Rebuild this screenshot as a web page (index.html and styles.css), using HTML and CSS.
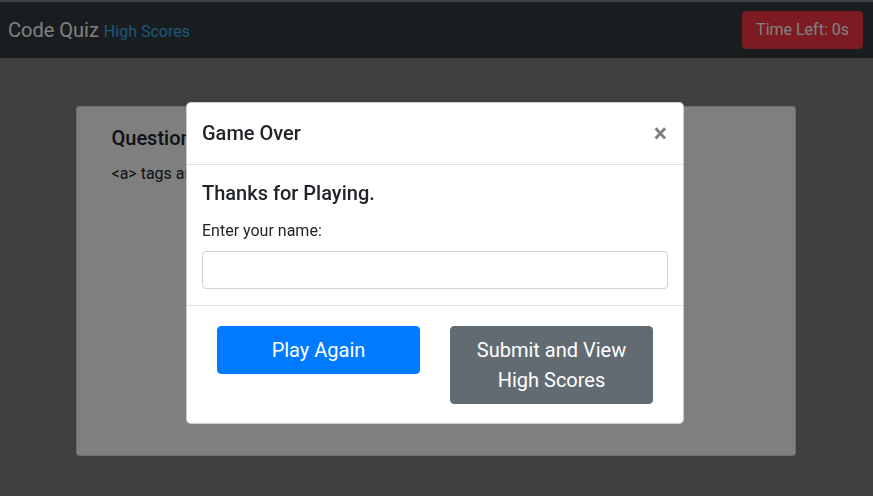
FILE: index.html
```html
<!DOCTYPE html>
<html lang="en">
<head>
<meta charset="utf-8">
<title>Code Quiz</title>
<link rel="stylesheet" href="styles.css">
</head>
<body>
<nav class="navbar">
  <div class="brand-group">
    <span class="brand">Code Quiz</span>
    <a class="hs-link" href="#">High Scores</a>
  </div>
  <button class="timer">Time Left: 0s</button>
</nav>
<main class="container">
  <section class="card">
    <h5 class="card-title">Question 10</h5>
    <p class="card-text">&lt;a&gt; tags are used for:</p>
  </section>
</main>
<div class="backdrop"></div>
<div class="modal">
  <div class="modal-header">
    <h5 class="modal-title">Game Over</h5>
    <span class="close">&times;</span>
  </div>
  <div class="modal-body">
    <h5 class="thanks">Thanks for Playing.</h5>
    <label class="label" for="name">Enter your name:</label>
    <input class="input" id="name" type="text">
  </div>
  <div class="modal-footer">
    <button class="btn btn-primary">Play Again</button>
    <button class="btn btn-secondary">Submit and View High Scores</button>
  </div>
</div>
</body>
</html>
```
FILE: styles.css
```css
* { box-sizing: border-box; }
html, body { margin: 0; height: 100%; }
body {
  background: #808080;
  font-family: "Roboto", "Liberation Sans", sans-serif;
  color: #212529;
  font-size: 16px;
  line-height: 1.5;
  overflow: hidden;
}
.navbar {
  margin-top: 2px;
  height: 56px;
  background: #343a40;
  display: flex;
  align-items: center;
  justify-content: space-between;
  padding: 0 10px 0 8px;
}
.brand-group { display: flex; align-items: baseline; gap: 5px; }
.brand { color: #fff; font-size: 20px; line-height: 30px; }
.hs-link { color: #36b0f4; text-decoration: none; font-size: 16px; }
.timer {
  font-family: inherit;
  font-size: 16px;
  line-height: 24px;
  padding: 6px 13px;
  color: #fff;
  background: #f83844;
  border: 1px solid #f83844;
  border-radius: 4px;
}
.container {
  width: 720px;
  margin: 48px auto 0;
  position: relative;
  left: -1px;
}
.card {
  background: #fff;
  border: 1px solid rgba(0,0,0,.125);
  border-radius: 4px;
  height: 350px;
  padding: 19px 35px;
}
.card-title { margin: 0 0 12px; font-size: 20px; font-weight: 500; line-height: 1.2; }
.card-text { margin: 0; }
.backdrop {
  position: fixed;
  inset: 0;
  background: rgba(0,0,0,.5);
}
.modal {
  position: fixed;
  top: 102px;
  left: 186px;
  width: 498px;
  background: #fff;
  border: 1px solid rgba(0,0,0,.2);
  border-radius: 5px;
  display: flex;
  flex-direction: column;
}
.modal-header {
  display: flex;
  align-items: center;
  justify-content: space-between;
  padding: 15px 15px 16px;
  border-bottom: 1px solid #dee2e6;
}
.modal-title { margin: 0; font-size: 20px; font-weight: 500; line-height: 30px; }
.close {
  font-size: 25px;
  font-weight: 700;
  line-height: 1;
  color: #000;
  opacity: .5;
  margin-right: 1px;
}
.modal-body {
  padding: 16px 15px;
  display: flex;
  flex-direction: column;
}
.thanks { margin: 0 0 14px; font-size: 20px; font-weight: 500; line-height: 24px; }
.label { margin-bottom: 8px; }
.input {
  height: 38px;
  border: 1px solid #ced4da;
  border-radius: 4px;
  font-family: inherit;
  font-size: 16px;
  padding: 6px 12px;
}
.modal-footer {
  border-top: 1px solid #dee2e6;
  padding: 20px 30px 19px;
  display: flex;
  align-items: flex-start;
  justify-content: space-between;
}
.btn {
  width: 203px;
  font-family: inherit;
  font-size: 20px;
  line-height: 30px;
  padding: 8px 16px;
  color: #fff;
  border: 1px solid transparent;
  border-radius: 4px;
}
.btn-primary { background: #007bff; border-color: #007bff; }
.btn-secondary { background: #626b72; border-color: #626b72; }
```
